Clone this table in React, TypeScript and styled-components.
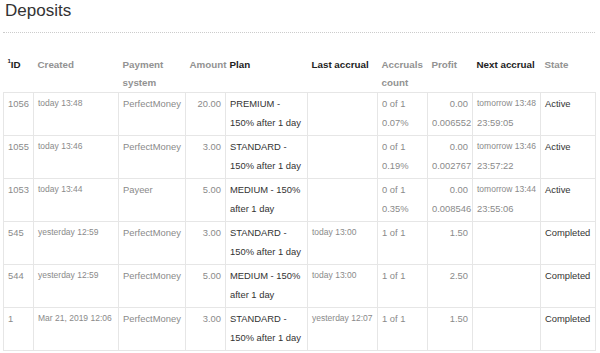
import React, { FC } from 'react'
import styled, { createGlobalStyle } from 'styled-components'

const GlobalStyle = createGlobalStyle`
  body {
    margin: 0;
    background: #fff;
    font-family: "Liberation Sans", Arial, sans-serif;
  }
`

const Wrapper = styled.div`
  width: 592px;
  padding: 0 3px;
`

const Title = styled.h1`
  margin: 0;
  padding: 0 2px 10px;
  font-size: 17px;
  line-height: 22px;
  font-weight: 400;
  color: #333;
  border-bottom: 1px dotted #ccc;
`

const Table = styled.table`
  margin-top: 22px;
  width: 592px;
  table-layout: fixed;
  border-collapse: collapse;
`

const Head = styled.th<{ $dark?: boolean }>`
  padding: 1px 4px 0;
  height: 37px;
  box-sizing: border-box;
  vertical-align: top;
  text-align: left;
  font-size: 9.8px;
  line-height: 18px;
  font-weight: 700;
  color: ${(p) => (p.$dark ? '#222' : '#929292')};
`

const Sup = styled.sup`
  font-size: 6px;
  vertical-align: 5px;
  line-height: 0;
`

const Cell = styled.td<{ $right?: boolean; $dark?: boolean; $small?: boolean }>`
  padding: 1px 4px 3px;
  height: 38px;
  border: 1px solid #e6e6e6;
  vertical-align: top;
  text-align: ${(p) => (p.$right ? 'right' : 'left')};
  font-size: ${(p) => (p.$small ? '8.5px' : '9.4px')};
  line-height: 19px;
  color: ${(p) => (p.$dark ? '#333' : '#8a8a8a')};
  white-space: nowrap;
  overflow: hidden;
`

const Wrap = styled.span`
  white-space: normal;
`

const Line = styled.div<{ $small?: boolean }>`
  font-size: ${(p) => (p.$small ? '8.5px' : '9.4px')};
`

interface Deposit {
  id: string
  created: string
  system: string
  amount: string
  plan: string
  last: string
  count: string
  percent?: string
  profit: string
  rate?: string
  next?: string
  left?: string
  state: string
}

const rows: Deposit[] = [
  { id: '1056', created: 'today 13:48', system: 'PerfectMoney', amount: '20.00', plan: 'PREMIUM - 150% after 1 day', last: '', count: '0 of 1', percent: '0.07%', profit: '0.00', rate: '0.006552', next: 'tomorrow 13:48', left: '23:59:05', state: 'Active' },
  { id: '1055', created: 'today 13:46', system: 'PerfectMoney', amount: '3.00', plan: 'STANDARD - 150% after 1 day', last: '', count: '0 of 1', percent: '0.19%', profit: '0.00', rate: '0.002767', next: 'tomorrow 13:46', left: '23:57:22', state: 'Active' },
  { id: '1053', created: 'today 13:44', system: 'Payeer', amount: '5.00', plan: 'MEDIUM - 150% after 1 day', last: '', count: '0 of 1', percent: '0.35%', profit: '0.00', rate: '0.008546', next: 'tomorrow 13:44', left: '23:55:06', state: 'Active' },
  { id: '545', created: 'yesterday 12:59', system: 'PerfectMoney', amount: '3.00', plan: 'STANDARD - 150% after 1 day', last: 'today 13:00', count: '1 of 1', profit: '1.50', state: 'Completed' },
  { id: '544', created: 'yesterday 12:59', system: 'PerfectMoney', amount: '5.00', plan: 'MEDIUM - 150% after 1 day', last: 'today 13:00', count: '1 of 1', profit: '2.50', state: 'Completed' },
  { id: '1', created: 'Mar 21, 2019 12:06', system: 'PerfectMoney', amount: '3.00', plan: 'STANDARD - 150% after 1 day', last: 'yesterday 12:07', count: '1 of 1', profit: '1.50', state: 'Completed' },
]

const widths = [30, 85, 67, 40, 82, 70, 50, 45, 68, 55]

const App: FC = () => (
  <Wrapper>
    <GlobalStyle />
    <Title>Deposits</Title>
    <Table>
      <colgroup>
        {widths.map((w, i) => (
          <col key={i} style={{ width: w }} />
        ))}
      </colgroup>
      <thead>
        <tr>
          <Head $dark>
            <Sup>1</Sup>ID
          </Head>
          <Head>Created</Head>
          <Head>
            Payment
            <br />
            system
          </Head>
          <Head>Amount</Head>
          <Head $dark>Plan</Head>
          <Head $dark>Last accrual</Head>
          <Head>
            Accruals
            <br />
            count
          </Head>
          <Head>Profit</Head>
          <Head $dark>Next accrual</Head>
          <Head>State</Head>
        </tr>
      </thead>
      <tbody>
        {rows.map((r) => (
          <tr key={r.id}>
            <Cell>{r.id}</Cell>
            <Cell $small>{r.created}</Cell>
            <Cell>{r.system}</Cell>
            <Cell $right>{r.amount}</Cell>
            <Cell $dark>
              <Wrap>{r.plan}</Wrap>
            </Cell>
            <Cell $small>{r.last}</Cell>
            <Cell>
              <Line>{r.count}</Line>
              {r.percent && <Line>{r.percent}</Line>}
            </Cell>
            <Cell $right>
              <Line>{r.profit}</Line>
              {r.rate && <Line>{r.rate}</Line>}
            </Cell>
            <Cell>
              {r.next && <Line $small>{r.next}</Line>}
              {r.left && <Line>{r.left}</Line>}
            </Cell>
            <Cell $dark>{r.state}</Cell>
          </tr>
        ))}
      </tbody>
    </Table>
  </Wrapper>
)

export default App
